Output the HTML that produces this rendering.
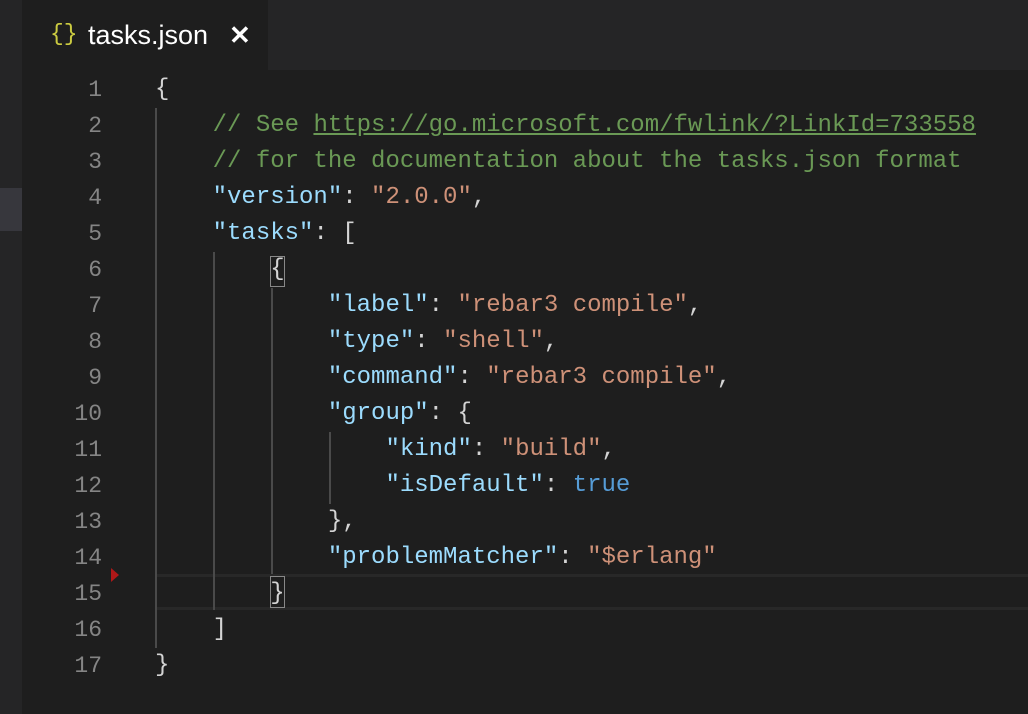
<!DOCTYPE html>
<html><head><meta charset="utf-8"><style>
*{margin:0;padding:0;box-sizing:border-box}
body{width:1028px;height:714px;background:#1e1e1e;overflow:hidden;position:relative;font-family:"Liberation Mono",monospace}
.tabbar{position:absolute;left:0;top:0;width:1028px;height:70px;background:#252526}
.tab{position:absolute;left:22px;top:0;width:246px;height:70px;background:#1e1e1e;font-family:"Liberation Sans",sans-serif;color:#fff;font-size:27px}
.side{position:absolute;left:0;top:70px;width:22px;height:644px;background:#252526}
.sel{position:absolute;left:0;top:188px;width:22px;height:43px;background:#37373d}
.ln{position:absolute;left:40px;width:62px;text-align:right;color:#858585;font-size:23px}
.code{position:absolute;left:155px;white-space:pre;font-size:24px;color:#d4d4d4;line-height:36px}
.k{color:#9cdcfe}.s{color:#ce9178}.c{color:#6a9955}.b{color:#569cd6}
.g{position:absolute;width:2px;background:#4a4a4a}
</style></head><body>
<div class="tabbar"></div>
<div class="tab"><span style="position:absolute;left:28px;top:21px;color:#cbcb41;font-family:'Liberation Mono',monospace;font-size:23px">{}</span><span style="position:absolute;left:66px;top:20px">tasks.json</span><span style="position:absolute;left:207px;top:20px;font-weight:bold;font-size:26px">✕</span></div>
<div class="side"></div><div class="sel"></div>
<div style="position:absolute;left:155px;top:574px;width:873px;height:36px;border-top:3px solid #282828;border-bottom:3px solid #282828"></div>
<div style="position:absolute;left:111px;top:568px;width:0;height:0;border-top:7px solid transparent;border-bottom:7px solid transparent;border-left:8px solid #b01818"></div>
<div class="g" style="left:155px;top:108px;height:540px"></div>
<div class="g" style="left:213px;top:252px;height:358px"></div>
<div class="g" style="left:271px;top:288px;height:286px"></div>
<div class="g" style="left:329px;top:432px;height:72px"></div>
<div style="position:absolute;left:270px;top:256px;width:15px;height:31px;border:1px solid #888"></div>
<div style="position:absolute;left:270px;top:576px;width:15px;height:32px;border:1px solid #888"></div>
<div class="ln" style="top:72px;line-height:36px">1<br>2<br>3<br>4<br>5<br>6<br>7<br>8<br>9<br>10<br>11<br>12<br>13<br>14<br>15<br>16<br>17</div>
<div class="code" style="top:72px">{
    <span class="c">// See <u>https://go.microsoft.com/fwlink/?LinkId=733558</u></span>
    <span class="c">// for the documentation about the tasks.json format</span>
    <span class="k">"version"</span>: <span class="s">"2.0.0"</span>,
    <span class="k">"tasks"</span>: [
        {
            <span class="k">"label"</span>: <span class="s">"rebar3 compile"</span>,
            <span class="k">"type"</span>: <span class="s">"shell"</span>,
            <span class="k">"command"</span>: <span class="s">"rebar3 compile"</span>,
            <span class="k">"group"</span>: {
                <span class="k">"kind"</span>: <span class="s">"build"</span>,
                <span class="k">"isDefault"</span>: <span class="b">true</span>
            },
            <span class="k">"problemMatcher"</span>: <span class="s">"$erlang"</span>
        }
    ]
}</div>
</body></html>
